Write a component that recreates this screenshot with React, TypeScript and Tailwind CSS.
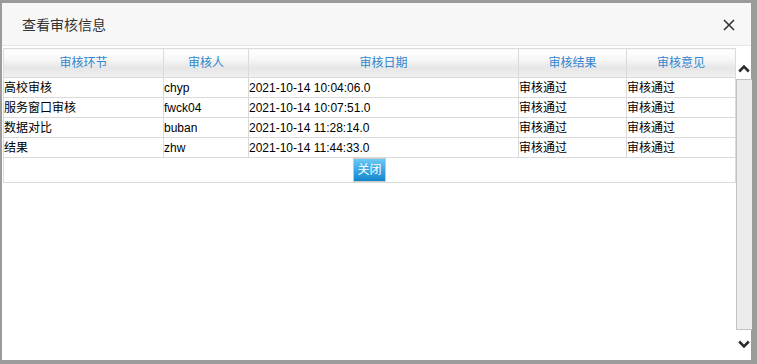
import React from "react";

const rows = [
  ["高校审核", "chyp", "2021-10-14 10:04:06.0", "审核通过", "审核通过"],
  ["服务窗口审核", "fwck04", "2021-10-14 10:07:51.0", "审核通过", "审核通过"],
  ["数据对比", "buban", "2021-10-14 11:28:14.0", "审核通过", "审核通过"],
  ["结果", "zhw", "2021-10-14 11:44:33.0", "审核通过", "审核通过"],
];

const heads = ["审核环节", "审核人", "审核日期", "审核结果", "审核意见"];
const widths = ["w-[160px]", "w-[85px]", "w-[270px]", "w-[108px]", "w-[109px]"];

const Chevron = ({ up }: { up?: boolean }) => (
  <svg width="12" height="9" viewBox="0 0 12 9">
    <path
      d={up ? "M1.2 7.5 L6 2.7 L10.8 7.5" : "M1.2 1.5 L6 6.3 L10.8 1.5"}
      fill="none"
      stroke="#2b2b2b"
      strokeWidth="2.6"
    />
  </svg>
);

export default function App() {
  return (
    <div
      className="w-[757px] h-[364px] bg-[#9b9b9b] pt-[3px] pl-[2px] pr-[6px] pb-[4px] overflow-hidden"
      style={{ fontFamily: '"Liberation Sans", "Noto Sans CJK SC", sans-serif' }}
    >
      <div className="w-full h-full bg-white flex flex-col">
        <div className="h-[43px] bg-[#f7f7f7] border-b border-[#e6e6e6] flex items-center justify-between pl-[20px] pr-[16px] shrink-0">
          <span className="text-[14px] text-[#333] leading-none mt-[1px]">查看审核信息</span>
          <svg width="12" height="12" viewBox="0 0 12 12" className="mt-[1px]">
            <path d="M1 1 L11 11 M11 1 L1 11" stroke="#333" strokeWidth="1.6" />
          </svg>
        </div>
        <div className="flex flex-1 min-h-0">
          <div className="flex-1 pt-[2px] pl-[1px]">
            <table className="border-collapse text-[12px] text-black table-fixed w-[732px]">
              <thead>
                <tr className="h-[29px]">
                  {heads.map((h, i) => (
                    <th
                      key={h}
                      className={`${widths[i]} border border-[#dadada] font-normal text-[#2f86cf] text-center p-0 bg-[linear-gradient(to_bottom,#ffffff_0%,#f7f7f7_35%,#e6e6e6_65%,#f1f1f1_100%)]`}
                    >
                      {h}
                    </th>
                  ))}
                </tr>
              </thead>
              <tbody>
                {rows.map((r, ri) => (
                  <tr key={ri} className="h-[20px]">
                    {r.map((c, ci) => (
                      <td
                        key={ci}
                        className="border border-[#dadada] px-0 py-0 leading-[18px] align-middle whitespace-nowrap"
                      >
                        {c}
                      </td>
                    ))}
                  </tr>
                ))}
                <tr className="h-[25px]">
                  <td colSpan={5} className="border border-[#dadada] p-0 text-center align-top">
                    <button className="h-[24px] w-[33px] mt-0 border border-[#c9c9c9] text-white text-[12px] leading-none bg-[linear-gradient(to_bottom,#6ccaf5_0%,#3aa6e6_50%,#1486cc_100%)]">
                      关闭
                    </button>
                  </td>
                </tr>
              </tbody>
            </table>
          </div>
          <div className="w-[16px] flex flex-col shrink-0">
            <div className="h-[33px] flex items-end justify-center pb-[6px]">
              <Chevron up />
            </div>
            <div className="flex-1 bg-[#ececec] border border-[#c2c2c2] border-r-0" />
            <div className="h-[30px] flex items-start justify-center pt-[10px]">
              <Chevron />
            </div>
          </div>
        </div>
      </div>
    </div>
  );
}
